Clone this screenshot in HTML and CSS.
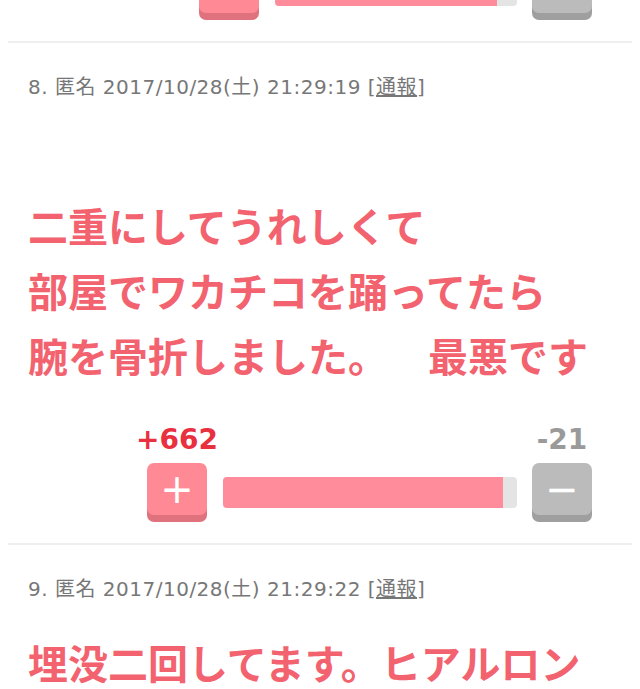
FILE: index.html
```html
<!DOCTYPE html>
<html>
<head>
<meta charset="utf-8">
<link rel="stylesheet" href="styles.css">
</head>
<body>
<div class="prev-tail">
    <div class="vote-row">
        <div class="vote-col">
            <div class="btn plus"></div>
        </div>
        <div class="bar prev-bar"><div class="fill" style="width: 91.7%"></div></div>
        <div class="vote-col">
            <div class="btn minus"></div>
        </div>
    </div>
</div>

<div class="post">
    <div class="meta">8. 匿名 2017/10/28(土) 21:29:19 [<a href="#">通報</a>]</div>
    <div class="body"><br>二重にしてうれしくて<br>部屋でワカチコを踊ってたら<br>腕を骨折しました。<span class="wide-space"></span>最悪です</div>
    <div class="vote-row">
        <div class="vote-col">
            <div class="count good">+662</div>
            <div class="btn plus"><span class="icon">+</span></div>
        </div>
        <div class="bar"><div class="fill" style="width: 95.2%"></div></div>
        <div class="vote-col">
            <div class="count bad">-21</div>
            <div class="btn minus"><span class="icon">−</span></div>
        </div>
    </div>
</div>

<div class="post">
    <div class="meta">9. 匿名 2017/10/28(土) 21:29:22 [<a href="#">通報</a>]</div>
    <div class="body">埋没二回してます。ヒアルロン</div>
</div>
</body>
</html>
```

FILE: styles.css
```css
body
{
    margin: 0 8px;
    background: #fff;
    font-family: "DejaVu Sans", "Noto Sans CJK JP", sans-serif;
    overflow: hidden;
}

.prev-tail
{
    height: 41px;
    overflow: hidden;
    display: flex;
    flex-direction: column;
}

.prev-tail .vote-row
{
    margin-top: -39px;
    padding-right: 40px;
}

.post
{
    border-top: 2px solid #efefef;
    padding: 29px 20px 21px 20px;
}

.meta
{
    font-size: 20px;
    letter-spacing: 0.5px;
    line-height: 30px;
    color: #777;
}

.meta a
{
    color: #777;
}

.body
{
    margin-top: 26px;
    font-family: "Noto Sans CJK JP", sans-serif;
    font-weight: bold;
    font-size: 40px;
    line-height: 65px;
    color: #f2636f;
}

.wide-space
{
    display: inline-block;
    width: 1em;
}

.vote-row
{
    display: flex;
    justify-content: flex-end;
    align-items: flex-end;
    padding-right: 20px;
    margin-top: 37px;
}

.vote-col
{
    width: 60px;
    display: flex;
    flex-direction: column;
    align-items: center;
}

.count
{
    font-weight: bold;
    font-size: 28px;
    line-height: 30px;
    margin-bottom: 8px;
    white-space: nowrap;
}

.good
{
    color: #e8303f;
}

.bad
{
    color: #9a9a9a;
}

.btn
{
    width: 60px;
    height: 52px;
    border-radius: 7px;
    display: flex;
    align-items: center;
    justify-content: center;
    margin-bottom: 7px;
}

.plus
{
    background: #ff8a96;
    box-shadow: 0 7px 0 #e0727e;
}

.minus
{
    background: #bbbbbb;
    box-shadow: 0 7px 0 #9f9f9f;
}

.icon
{
    color: #fff;
    font-size: 40px;
    line-height: 40px;
    font-family: "DejaVu Sans", sans-serif;
}

.bar
{
    width: 294px;
    height: 31px;
    margin: 0 15px 14px 16px;
    background: #e4e4e4;
    border-radius: 4px;
    overflow: hidden;
}

.bar.prev-bar
{
    width: 242px;
}

.fill
{
    height: 100%;
    background: #ff8c9a;
}
```
